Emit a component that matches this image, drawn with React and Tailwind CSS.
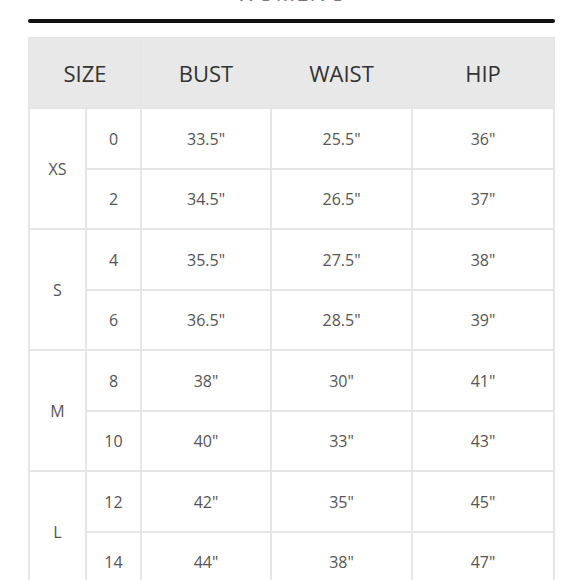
import React from "react";

const rows = [
  { size: "XS", items: [["0", "33.5\"", "25.5\"", "36\""], ["2", "34.5\"", "26.5\"", "37\""]] },
  { size: "S", items: [["4", "35.5\"", "27.5\"", "38\""], ["6", "36.5\"", "28.5\"", "39\""]] },
  { size: "M", items: [["8", "38\"", "30\"", "41\""], ["10", "40\"", "33\"", "43\""]] },
  { size: "L", items: [["12", "42\"", "35\"", "45\""], ["14", "44\"", "38\"", "47\""]] },
];

const cell = "bg-white flex items-center justify-center text-[16px] text-[#555]";
const head = "bg-[#e8e8e8] flex items-center justify-center text-[22px] font-medium text-[#333]";

export default function App() {
  return (
    <div
      className="w-[580px] h-[580px] overflow-hidden bg-white"
      style={{ fontFamily: '"Open Sans", "Liberation Sans", sans-serif' }}
    >
      <div className="h-[3px] overflow-hidden flex justify-center items-end">
        <span className="text-[22px] leading-[22px] text-[#777] tracking-[1px] ml-[2px]">WOMEN'S</span>
      </div>
      <div className="mt-[16px] ml-[28px] w-[527px] h-[4px] bg-[#111] rounded-[2px]" />
      <div className="mt-[14px] ml-[28px] w-[527px] p-[2px] bg-[#e6e6e6] grid gap-[2px] grid-cols-[55px_53px_128px_139px_140px] grid-rows-[68px_59px_58px_59px_58px_59px_58px_59px_58px]">
        <div className={`${head} col-span-2`}>SIZE</div>
        <div className={head}>BUST</div>
        <div className={head}>WAIST</div>
        <div className={head}>HIP</div>
        {rows.map((r) => (
          <React.Fragment key={r.size}>
            <div className={`${cell} row-span-2`}>{r.size}</div>
            {r.items.map((it, i) => (
              <React.Fragment key={i}>
                <div className={cell}>{it[0]}</div>
                <div className={cell}>{it[1]}</div>
                <div className={cell}>{it[2]}</div>
                <div className={cell}>{it[3]}</div>
              </React.Fragment>
            ))}
          </React.Fragment>
        ))}
      </div>
    </div>
  );
}
